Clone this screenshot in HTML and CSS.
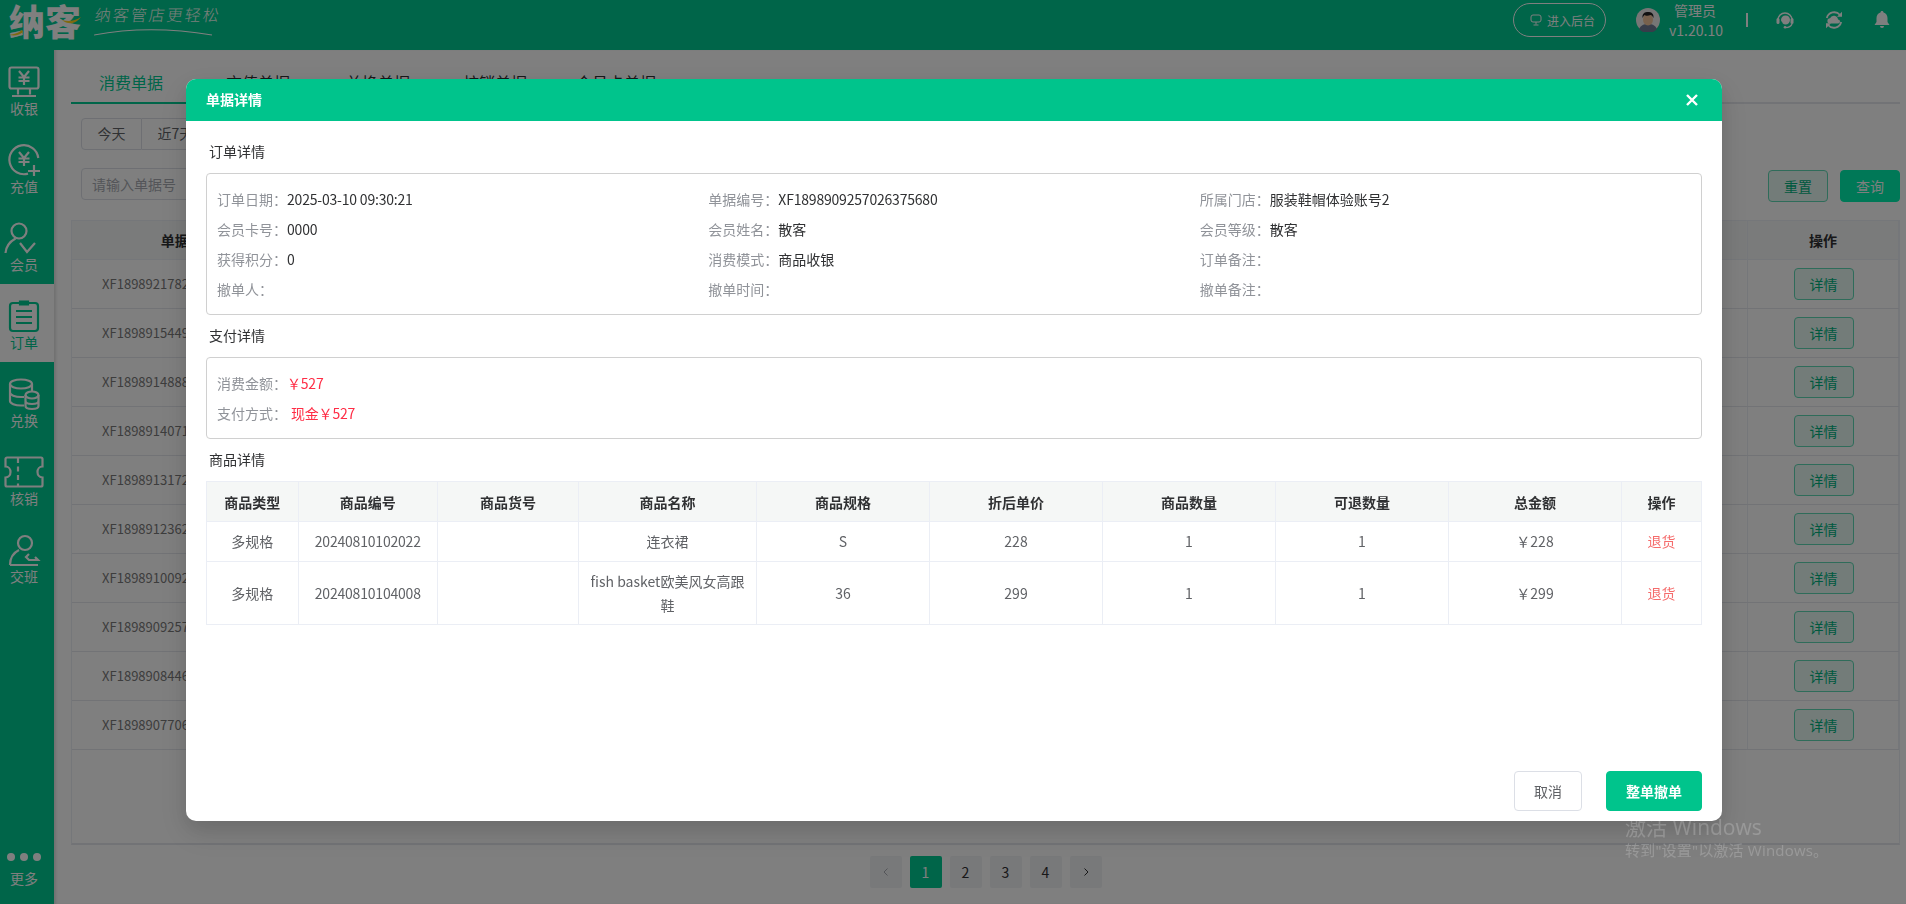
FILE: index.html
```html
<!DOCTYPE html>
<html lang="zh-CN">
<head>
<meta charset="utf-8">
<title>单据详情</title>
<link rel="stylesheet" href="styles.css">
</head>
<body>
<header class="topbar">
  <div class="logo">
    <span class="logo-mark">纳客<svg class="logo-gold" viewBox="0 0 72 30"><path d="M0 29c6-1 9-2 13-5l1 2c-3 3-8 4-14 3zM53 14c6 2 13 1 19-3-4 6-12 9-19 3z"/></svg></span>
    <span class="slogan">纳客管店更轻松<svg class="slogan-line" viewBox="0 0 118 8"><path d="M0 7C30 1 70-1 118 7"/></svg></span>
  </div>
  <div class="top-right">
    <button class="pill"><svg class="pill-icon" viewBox="0 0 12 12"><rect x="1" y="1" width="10" height="7" rx="2"/><path d="M6 8v2.500M3.500 11h5"/></svg>进入后台</button>
    <svg class="avatar" viewBox="0 0 24 24"><circle cx="12" cy="12" r="12" fill="#ececec"/><path d="M3 21c2-4 5-5 9-5s7 1 9 5a12 12 0 0 1-18 0z" fill="#6f7a94"/><ellipse cx="12" cy="11.500" rx="5" ry="6" fill="#eec39a"/><path d="M6.500 10C6 5 9 4 12 4s6 1 5.500 6c-1-2-2-3-3-3-2 1-5 1-6 0-1 1-1.500 2-2 3z" fill="#222"/></svg>
    <div class="user"><div>管理员</div><div>v1.20.10</div></div>
    <span class="divider"></span>
    <svg class="top-icon headset" viewBox="0 0 18 18"><path d="M2 9a7 7 0 0 1 14 0" fill="none" stroke="#fff" stroke-width="1.500"/><rect x=".5" y="7" width="3" height="6" rx="1.500" fill="#fff"/><rect x="14.500" y="7" width="3" height="6" rx="1.500" fill="#fff"/><path d="M9.500 4.500c3 0 4.500 2 4.500 4.500s-2 4.500-4.500 4.500c-1 0-2-.3-2.700-.9C6.500 11 5 10.500 5 9c0-2.500 2-4.500 4.500-4.500z" fill="#fff"/><path d="M16 13c-1 2.500-3.500 3.500-6.500 3.500" fill="none" stroke="#fff" stroke-width="1.300"/><circle cx="9" cy="16.300" r="1.300" fill="#fff"/></svg>
    <svg class="top-icon cloud" viewBox="0 0 18 18"><path d="M1.800 7A7.600 7.600 0 0 1 15 4M16.200 11A7.600 7.600 0 0 1 3 14" fill="none" stroke="#fff" stroke-width="1.800"/><path d="M17 .8v5h-5zM1 17.200v-5h5z" fill="#fff"/><path d="M5 12.500a2.600 2.600 0 0 1 0-5.200 4.200 4.200 0 0 1 8 1.200 2 2 0 0 1 0 4z" fill="#fff"/></svg>
    <svg class="top-icon bell" viewBox="0 0 18 18"><path d="M9 0c1 0 1.500.7 1.500 1.500C13 2.300 14.500 4.500 14.500 7v4l2 3h-15l2-3V7c0-2.500 1.500-4.700 4-5.500C7.500.7 8 0 9 0z" fill="#fff"/><path d="M7 15h4a2 2 0 0 1-4 0z" fill="#fff"/></svg>
  </div>
</header>

<div class="shell">
  <nav class="sidebar">
    <a class="nav-item"><svg class="nav-icon" viewBox="0 0 32 32"><rect x="1.500" y="1.500" width="29" height="21" rx="2"/><path d="M11 5l5 6 5-6M10.500 11.500h11M10.500 15h11M16 11v8M10 22.500v6M22 22.500v6M4 30h24"/></svg><span>收银</span></a>
    <a class="nav-item"><svg class="nav-icon" viewBox="0 0 32 32"><path d="M20 29.600A14.500 14.500 0 1 1 30.300 14"/><path d="M11 8l5 6 5-6M10.500 14.500h11M10.500 18h11M16 14v8M20 27h12M26 21v11"/></svg><span>充值</span></a>
    <a class="nav-item"><svg class="nav-icon" viewBox="0 0 32 32"><circle cx="11" cy="9" r="7.500"/><path d="M-2.500 31C-2 24 3 19 7.500 16.500M12 21l7 9 8-9"/></svg><span>会员</span></a>
    <a class="nav-item active"><svg class="nav-icon" viewBox="0 0 32 32"><rect x="2" y="3" width="28" height="28" rx="3"/><path d="M12 1.500h8v3h-8zM8 11h16M8 17h16M8 23h16"/></svg><span>订单</span></a>
    <a class="nav-item"><svg class="nav-icon" viewBox="0 0 32 32"><ellipse cx="13" cy="6" rx="11" ry="4.500"/><path d="M2 6v17c0 2.500 5 4.500 11 4.500h3M2 14.500c0 2.500 5 4.500 11 4.500h3M24 6v7"/><ellipse cx="24" cy="17" rx="6.500" ry="3.500"/><path d="M17.500 17v11c0 2 3 3 6.500 3s6.500-1 6.500-3V17M17.500 23c0 2 3 3 6.500 3s6.500-1 6.500-3"/></svg><span>兑换</span></a>
    <a class="nav-item"><svg class="nav-icon ticket" viewBox="0 0 40 32"><path d="M3 1.500h34a1.500 1.500 0 0 1 1.500 1.500v7.500c-3 0-5 2.500-5 5.500s2 5.500 5 5.500V29a1.500 1.500 0 0 1-1.500 1.500H3A1.500 1.500 0 0 1 1.500 29v-7.500c3 0 5-2.500 5-5.500s-2-5.500-5-5.500V3A1.500 1.500 0 0 1 3 1.500z"/><path d="M14 2v29" stroke-dasharray="5 3.500"/></svg><span>核销</span></a>
    <a class="nav-item"><svg class="nav-icon" viewBox="0 0 32 32"><circle cx="17" cy="9" r="7"/><path d="M2 31c0-7 3-12 9-15M2 31h28M21 20l-3 3 3 3h9l-3-3"/></svg><span>交班</span></a>
    <a class="nav-more"><span class="dots"><i></i><i></i><i></i></span><span>更多</span></a>
  </nav>

  <main class="content">
    <div class="tabs">
      <a class="tab active">消费单据</a>
      <a class="tab">充值单据</a>
      <a class="tab">兑换单据</a>
      <a class="tab">核销单据</a>
      <a class="tab">会员卡单据</a>
    </div>
    <div class="quick">
      <button>今天</button><button>近7天</button><button>近30天</button>
    </div>
    <div class="filters">
      <input class="search" placeholder="请输入单据号">
      <button class="btn-reset">重置</button>
      <button class="btn-query">查询</button>
    </div>
    <div class="list">
      <table class="orders">
        <colgroup><col class="c-id"><col><col class="c-op"></colgroup>
        <thead><tr><th>单据编号</th><th>订单日期</th><th>操作</th></tr></thead>
        <tbody>
          <tr><td>XF1898921782026375680</td><td>2025-03-10</td><td><button class="btn-detail">详情</button></td></tr>
          <tr><td>XF1898915449026375680</td><td>2025-03-10</td><td><button class="btn-detail">详情</button></td></tr>
          <tr><td>XF1898914888026375680</td><td>2025-03-10</td><td><button class="btn-detail">详情</button></td></tr>
          <tr><td>XF1898914071026375680</td><td>2025-03-10</td><td><button class="btn-detail">详情</button></td></tr>
          <tr><td>XF1898913172026375680</td><td>2025-03-10</td><td><button class="btn-detail">详情</button></td></tr>
          <tr><td>XF1898912362026375680</td><td>2025-03-10</td><td><button class="btn-detail">详情</button></td></tr>
          <tr><td>XF1898910092026375680</td><td>2025-03-10</td><td><button class="btn-detail">详情</button></td></tr>
          <tr><td>XF1898909257026375680</td><td>2025-03-10</td><td><button class="btn-detail">详情</button></td></tr>
          <tr><td>XF1898908446026375680</td><td>2025-03-10</td><td><button class="btn-detail">详情</button></td></tr>
          <tr><td>XF1898907706026375680</td><td>2025-03-10</td><td><button class="btn-detail">详情</button></td></tr>
        </tbody>
      </table>
    </div>
    <div class="pager">
      <button class="muted"><svg viewBox="0 0 10 10"><path d="M6.500 1.500L3 5l3.500 3.500"/></svg></button>
      <button class="current">1</button><button>2</button><button>3</button><button>4</button>
      <button><svg viewBox="0 0 10 10"><path d="M3.500 1.500L7 5 3.500 8.500"/></svg></button>
    </div>
  </main>
</div>

<div class="overlay">
  <section class="dialog">
    <div class="dialog-head">
      <span>单据详情</span>
      <svg class="close" viewBox="0 0 12 12"><path d="M1 1l10 10M11 1L1 11"/></svg>
    </div>
    <div class="dialog-body">
      <h3 class="sec first">订单详情</h3>
      <div class="box grid3">
        <div><span class="k">订单日期：</span><span class="num">2025-03-10 09:30:21</span></div>
        <div><span class="k">单据编号：</span><span class="num">XF1898909257026375680</span></div>
        <div><span class="k">所属门店：</span>服装鞋帽体验账号2</div>
        <div><span class="k">会员卡号：</span><span class="num">0000</span></div>
        <div><span class="k">会员姓名：</span>散客</div>
        <div><span class="k">会员等级：</span>散客</div>
        <div><span class="k">获得积分：</span>0</div>
        <div><span class="k">消费模式：</span>商品收银</div>
        <div><span class="k">订单备注：</span></div>
        <div><span class="k">撤单人：</span></div>
        <div><span class="k">撤单时间：</span></div>
        <div><span class="k">撤单备注：</span></div>
      </div>
      <h3 class="sec">支付详情</h3>
      <div class="box">
        <div><span class="k">消费金额：</span><span class="red num">￥527</span></div>
        <div><span class="k">支付方式：</span><span class="red gap num">现金￥527</span></div>
      </div>
      <h3 class="sec">商品详情</h3>
      <table class="goods">
        <colgroup>
          <col class="g1"><col class="g2a"><col class="g2b"><col class="g3"><col class="g4"><col class="g4"><col class="g4"><col class="g4"><col class="g4"><col class="g6">
        </colgroup>
        <thead><tr><th>商品类型</th><th>商品编号</th><th>商品货号</th><th>商品名称</th><th>商品规格</th><th>折后单价</th><th>商品数量</th><th>可退数量</th><th>总金额</th><th>操作</th></tr></thead>
        <tbody>
          <tr><td>多规格</td><td class="num">20240810102022</td><td></td><td>连衣裙</td><td>S</td><td>228</td><td>1</td><td>1</td><td>￥228</td><td class="refund">退货</td></tr>
          <tr><td>多规格</td><td class="num">20240810104008</td><td></td><td>fish basket欧美风女高跟鞋</td><td>36</td><td>299</td><td>1</td><td>1</td><td>￥299</td><td class="refund">退货</td></tr>
        </tbody>
      </table>
    </div>
    <div class="dialog-foot">
      <button class="btn-cancel">取消</button>
      <button class="btn-void">整单撤单</button>
    </div>
  </section>
</div>

<div class="watermark">
  <div class="wm-1">激活 Windows</div>
  <div class="wm-2">转到"设置"以激活 Windows。</div>
</div>
</body>
</html>
```

FILE: styles.css
```css
* { box-sizing: border-box; }
html, body { margin: 0; height: 100%; overflow: hidden; }
body {
  font-family: "Noto Sans CJK SC", "Liberation Sans", sans-serif;
  font-size: 14px;
  color: #606266;
  background: #fff;
  display: flex;
  flex-direction: column;
}
button, input { font: inherit; }
.num { letter-spacing: -.2px; }

/* top bar */
.topbar {
  height: 50px;
  flex: none;
  background: #00ca92;
  display: flex;
  align-items: flex-start;
  color: #fff;
}
.logo { display: flex; align-items: flex-start; height: 50px; }
.logo-mark {
  position: relative;
  margin: 0 0 0 9px;
  font-size: 36px;
  line-height: 40px;
  font-weight: 900;
  color: #fff;
}
.logo-gold { position: absolute; left: 0; top: 6px; width: 72px; height: 30px; fill: #ffd21f; }
.slogan {
  position: relative;
  margin: 4px 0 0 14px;
  font-size: 16px;
  line-height: 20px;
  letter-spacing: 2px;
  font-weight: 300;
  transform: skewX(-8deg);
  color: #f4fff6;
}
.slogan-line { position: absolute; left: 2px; top: 24px; width: 118px; height: 8px; fill: none; stroke: #fff; stroke-width: 1; }
.top-right { margin-left: auto; height: 40px; display: flex; align-items: center; padding-right: 15px; }
.pill {
  width: 93px; height: 34px;
  border: 1px solid #fff;
  border-radius: 17px;
  background: transparent;
  color: #fff;
  font-size: 12px;
  padding: 0 0 0 6px;
  display: flex; align-items: center; justify-content: center;
}
.pill-icon { width: 12px; height: 12px; margin-right: 5px; fill: none; stroke: #fff; stroke-width: 1; }
.avatar { width: 24px; height: 24px; margin-left: 30px; }
.user { width: 52px; margin-left: 9px; text-align: center; line-height: 20px; font-size: 14px; white-space: nowrap; }
.divider { width: 2px; height: 14px; background: #fff; margin-left: 25px; }
.top-icon { width: 18px; height: 18px; }
.headset { margin-left: 28px; }
.cloud { margin-left: 31px; }
.bell { margin-left: 30px; }

/* layout */
.shell { flex: 1; display: flex; min-height: 0; }
.sidebar {
  width: 54px; flex: none;
  background: #00ca92;
  display: flex; flex-direction: column;
  color: #fff;
}
.nav-item {
  height: 78px; flex: none;
  padding: 16px 6px 0 0;
  display: flex; flex-direction: column; align-items: center;
  line-height: 20px;
}
.nav-item.active { background: #fff; color: #00ca92; }
.nav-icon {
  width: 32px; height: 32px; flex: none;
  fill: none; stroke: currentColor; stroke-width: 2.200;
  overflow: visible;
}
.ticket { width: 40px; }
.nav-more {
  margin-top: auto;
  padding: 0 6px 16px 0;
  display: flex; flex-direction: column; align-items: center;
  line-height: 20px;
}
.dots { display: flex; gap: 5px; margin-bottom: 7px; }
.dots i { width: 8px; height: 8px; border-radius: 50%; background: #fff; }

.content {
  flex: 1; min-width: 0;
  padding: 0 6px 0 17px;
  box-shadow: inset 3px 0 3px -1px rgba(0,0,0,.12);
}
.tabs {
  height: 54px;
  display: flex; align-items: flex-end;
  border-bottom: 2px solid #e4e7ed;
}
.tab { font-size: 16px; line-height: 24px; padding: 0 0 9px; margin-left: 56px; color: #303133; height: 34px; margin-bottom: -2px; border-bottom: 2px solid transparent; }
.tab.active { margin-left: 0; padding-left: 28px; padding-right: 27px; color: #00ca92; border-bottom-color: #00ca92; }
.tab:nth-child(2) { margin-left: 36px; }
.tab:nth-child(4) { margin-left: 53px; }
.tab:nth-child(5) { margin-left: 49px; }

.quick { margin: 14px 0 0 10px; display: flex; }
.quick button {
  height: 32px; padding: 0 15.500px 2px;
  border: 1px solid #dcdfe6; border-left: none; background: #fff; color: #606266;
}
.quick button:first-child { border-left: 1px solid #dcdfe6; border-radius: 4px 0 0 4px; }
.filters { margin: 18px 0 0 10px; display: flex; align-items: flex-start; }
.search {
  width: 230px; height: 32px; padding: 0 10px;
  border: 1px solid #dcdfe6; border-radius: 4px; outline: none; color: #606266;
}
.search::placeholder { color: #a8abb2; }
.btn-reset, .btn-query { width: 60px; height: 32px; margin-top: 2px; border-radius: 4px; padding: 0 0 1px; }
.btn-reset { margin-left: auto; background: #e6f9f3; border: 1px solid #5fd9b4; color: #00b37f; }
.btn-query { margin-left: 12px; background: #00f0ae; border: 1px solid #00f0ae; color: #fff; }

.list { margin-top: 18px; height: 625px; border: 1px solid #ebeef5; border-bottom: 2px solid #e4e7ed; }
.orders { width: 100%; border-collapse: collapse; table-layout: fixed; }
.c-id { width: 234px; }
.c-op { width: 151px; }
.orders th {
  height: 38px; background: #f5f7f6; color: #303133; font-weight: 700; text-align: center;
  border-right: 1px solid #ebeef5; border-bottom: 1px solid #ebeef5; padding: 0;
}
.orders td {
  height: 49px; padding: 0; text-align: center; color: #7a7a7a;
  border-right: 1px solid #ebeef5; border-bottom: 1px solid #e4e7ed;
}
.orders td:first-child { text-align: left; padding-left: 30px; font-size: 13px; letter-spacing: .02px; white-space: nowrap; }
.orders td:last-child { padding-left: 1px; }
.btn-detail { width: 60px; height: 32px; padding: 0; border-radius: 4px; background: #e6f9f3; border: 1px solid #5fd9b4; color: #00b37f; display: block; margin: 0 auto; }

.pager { margin: 11px 0 0; display: flex; justify-content: center; gap: 8px; }
.pager button { width: 32px; height: 32px; padding: 0; border: none; border-radius: 2px; background: #f0f2f5; color: #303133; }
.pager svg { width: 10px; height: 10px; fill: none; stroke: #303133; stroke-width: 1; display: block; margin: auto; }
.pager .muted svg { stroke: #a8abb2; }
.pager .current { background: #00ca92; color: #fff; }

/* dialog */
.overlay {
  position: fixed; inset: 0;
  background: rgba(0,0,0,.5);
  display: flex; justify-content: center; align-items: flex-start;
  padding: 79px 0 0 2px;
}
.dialog {
  width: 1536px; height: 742px;
  background: #fff;
  border-radius: 10px;
  overflow: hidden;
  box-shadow: 0 12px 32px 4px rgba(0,0,0,.08), 0 8px 20px rgba(0,0,0,.1);
  display: flex; flex-direction: column;
}
.dialog-head {
  height: 42px; flex: none;
  background: #00c48c;
  color: #fff;
  font-weight: 700;
  padding: 0 24px 2px 20px;
  display: flex; align-items: center; justify-content: space-between;
}
.close { width: 12px; height: 12px; fill: none; stroke: #fff; stroke-width: 2.400; position: relative; top: 1px; }
.dialog-body { padding: 0 20px; flex: 1; }
.sec { margin: 0; height: 42px; line-height: 40px; padding-left: 3px; font-size: 14px; font-weight: 400; color: #303133; }
.sec.first { margin-top: 10px; }
.box {
  border: 1px solid #d0d0d0; border-radius: 4px;
  padding: 10px;
  line-height: 30px;
  color: #303133;
}
.grid3 { display: grid; grid-template-columns: repeat(3, 1fr); }
.k { color: #909399; }
.red { color: #ff2d46; }
.gap { margin-left: 4px; }
.goods { width: calc(100% - 1.500px); border-collapse: collapse; table-layout: fixed; }
.g1 { width: 91.500px; } .g2a { width: 139.500px; } .g2b { width: 141px; } .g3 { width: 178px; } .g4 { width: 173px; } .g6 { width: 80px; }
.goods th, .goods td { border: 1px solid #ebeef5; text-align: center; }
.goods th { height: 40px; background: #f5f7f6; color: #303133; font-weight: 700; padding: 0; }
.goods td { padding: 7px 10px; line-height: 24px; color: #606266; }
.goods tbody tr:first-child td { padding-bottom: 8px; }
.goods .refund { color: #f56c6c; padding: 7px 0; }
.dialog-foot { flex: none; padding: 0 20px 10px; display: flex; justify-content: flex-end; gap: 24px; }
.btn-cancel, .btn-void { height: 40px; border-radius: 4px; padding: 0 0 1px; }
.btn-cancel { width: 68px; background: #fff; border: 1px solid #dcdfe6; color: #606266; }
.btn-void { width: 96px; background: #00c48c; border: 1px solid #00c48c; color: #fff; font-weight: 700; }

.watermark { position: fixed; left: 1625px; top: 813px; color: rgba(255,255,255,.2); pointer-events: none; white-space: nowrap; font-family: "Open Sans", "Noto Sans CJK SC", sans-serif; }
.wm-1 { font-size: 21px; line-height: 28px; }
.wm-2 { font-size: 15px; line-height: 19px; letter-spacing: .2px; }
```
